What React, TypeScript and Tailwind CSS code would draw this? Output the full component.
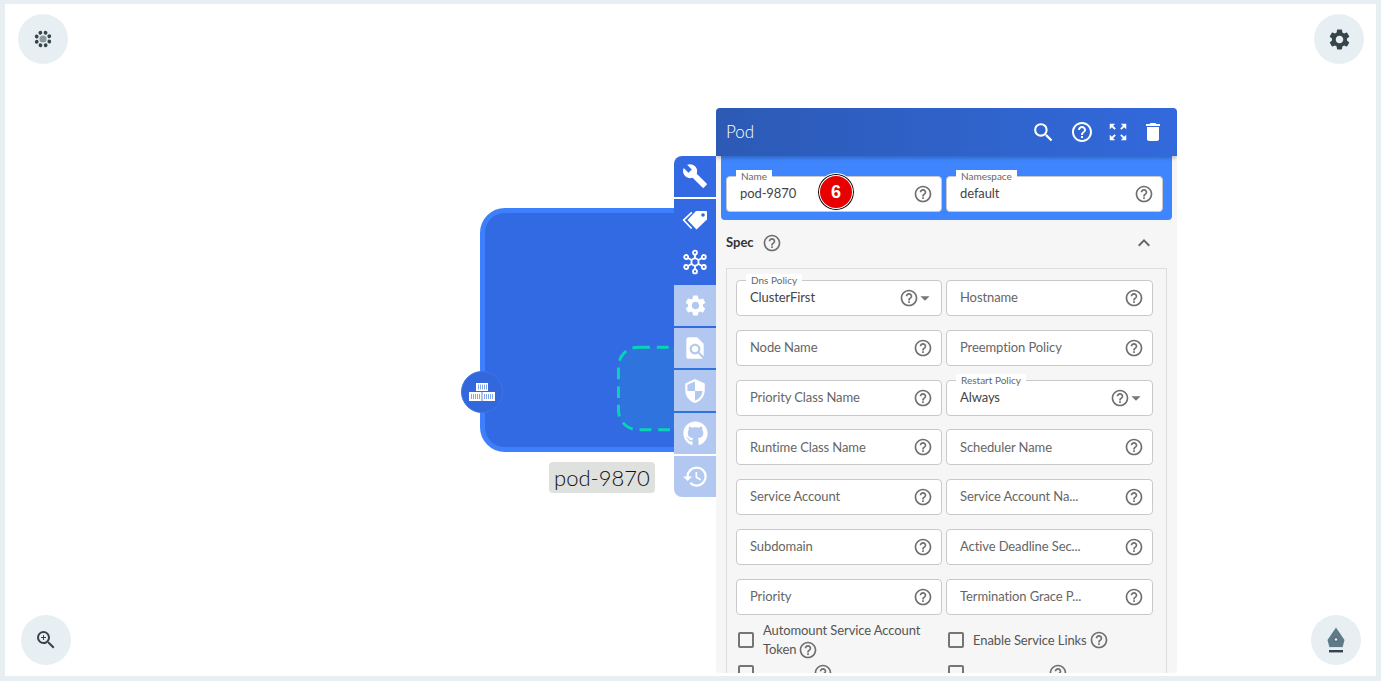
import { ReactNode } from "react";
import { FaGithub } from "react-icons/fa";
import {
  MdArrowDropDown,
  MdBuild,
  MdDelete,
  MdExpandLess,
  MdFindInPage,
  MdHelpOutline,
  MdHistory,
  MdSearch,
  MdSecurity,
  MdSettings,
  MdZoomIn,
  MdZoomOutMap,
} from "react-icons/md";

const TagsIcon = () => (
  <svg width="26" height="26" viewBox="0 0 26 26" fill="none">
    <path d="M9.8 6.3 1.6 14.1l8 8.4" stroke="white" strokeWidth="1.6" />
    <path d="M14 5h10a1 1 0 0 1 1 1v7.5L14.5 23.5 5.5 14z" fill="white" />
    <circle cx="21" cy="9" r="1.8" fill="#3369e3" />
  </svg>
);

const HubIcon = () => (
  <svg width="26" height="26" viewBox="0 0 26 26" fill="none" stroke="white" strokeWidth="1.8">
    <circle cx="13" cy="13" r="3.6" />
    <circle cx="13" cy="3.6" r="2" />
    <circle cx="13" cy="22.4" r="2" />
    <circle cx="4.2" cy="8" r="2" />
    <circle cx="21.8" cy="8" r="2" />
    <circle cx="4.2" cy="18" r="2" />
    <circle cx="21.8" cy="18" r="2" />
    <path d="M13 5.6v3.8M13 16.6v3.8M6 9l3.9 2.2M20 9l-3.9 2.2M6 17l3.9-2.2M20 17l-3.9-2.2" />
  </svg>
);

const ContainersIcon = () => (
  <svg width="26" height="18" viewBox="0 0 26 18" fill="white">
    <path d="M7 0h12v8H7zM0 9h12.6v9H0zM13.4 9H26v9H13.4z" />
    <path
      d="M9.5 1.5v5M11.5 1.5v5M13.5 1.5v5M15.5 1.5v5M17.5 1.5v5M2.5 11v5M4.5 11v5M6.5 11v5M8.5 11v5M10.5 11v5M15.5 11v5M17.5 11v5M19.5 11v5M21.5 11v5M23.5 11v5"
      stroke="#3268dc"
      strokeWidth="0.6"
    />
  </svg>
);

const FlowerIcon = () => (
  <svg width="18" height="18" viewBox="0 0 18 18">
    <circle cx="9" cy="9" r="3.6" fill="#8c989d" />
    {[0, 45, 90, 135, 180, 225, 270, 315].map((a) => (
      <circle key={a} cx="9" cy="2.2" r="1.9" fill="#36454c" transform={`rotate(${a + 22} 9 9)`} />
    ))}
  </svg>
);

const PenIcon = () => (
  <svg width="20" height="26" viewBox="0 0 20 26">
    <path d="M10 0.5 18.5 13 16.5 20.5H3.5L1.5 13z" fill="#5f7a89" />
    <path d="M3.5 20.5h13" stroke="#dfe6e9" strokeWidth="1" />
    <circle cx="10" cy="12.5" r="1.8" fill="#e8eff2" stroke="#36454c" strokeWidth="0.7" />
    <rect x="3" y="23" width="14" height="2.4" fill="#36454c" />
  </svg>
);

const Help = ({ size = 20 }: { size?: number }) => (
  <MdHelpOutline size={size} className="shrink-0 text-[#6f6f6f]" />
);

const CornerButton = ({ className, children }: { className: string; children: ReactNode }) => (
  <div className={`absolute flex h-[50px] w-[50px] items-center justify-center rounded-full bg-[#e8eff2] ${className}`}>
    {children}
  </div>
);

const Field = ({ label, value, legend, select }: { label?: string; value?: string; legend?: string; select?: boolean }) => (
  <div className="relative flex h-9 min-w-0 items-center rounded border border-[#c9c9c9] bg-white pl-[13px] pr-2 text-[13px] tracking-[-0.1px]">
    {legend && (
      <span className="absolute left-[9px] top-[-7px] bg-white px-[5px] text-[10px] leading-[12px] tracking-normal text-[#666]">
        {legend}
      </span>
    )}
    <span className={`flex-1 truncate ${value ? "text-[#444]" : "text-[#666]"}`}>{value ?? label}</span>
    <Help />
    {select && <MdArrowDropDown size={22} className="-ml-[5px] -mr-[3px] text-[#777]" />}
  </div>
);

const Check = ({ children }: { children?: ReactNode }) => (
  <div className="flex items-center gap-[9px] pl-[2px] text-[13px] leading-[19px] tracking-[-0.1px] text-[#555]">
    <span className="h-4 w-4 shrink-0 rounded-[2px] border-2 border-[#757575]" />
    <div>{children}</div>
  </div>
);

const tabs = [
  { icon: <MdBuild size={26} />, active: true, round: "rounded-tl-lg" },
  { icon: <TagsIcon />, active: true },
  { icon: <HubIcon />, active: true },
  { icon: <MdSettings size={25} />, active: false },
  { icon: <MdFindInPage size={26} />, active: false },
  { icon: <MdSecurity size={26} />, active: false },
  { icon: <FaGithub size={25} />, active: false },
  { icon: <MdHistory size={27} />, active: false, round: "rounded-bl-lg" },
];

const fields: { label?: string; value?: string; legend?: string; select?: boolean }[] = [
  { value: "ClusterFirst", legend: "Dns Policy", select: true },
  { label: "Hostname" },
  { label: "Node Name" },
  { label: "Preemption Policy" },
  { label: "Priority Class Name" },
  { value: "Always", legend: "Restart Policy", select: true },
  { label: "Runtime Class Name" },
  { label: "Scheduler Name" },
  { label: "Service Account" },
  { label: "Service Account Na..." },
  { label: "Subdomain" },
  { label: "Active Deadline Sec..." },
  { label: "Priority" },
  { label: "Termination Grace P..." },
];

export default function App() {
  return (
    <div className="h-[681px] w-[1381px] overflow-hidden bg-[#e8eff2] pb-[5px] pl-[5px] pr-[5px] pt-1 font-['Lato',sans-serif]">
      <div className="relative h-full w-full overflow-hidden bg-white">
        <CornerButton className="left-[13px] top-[10px]">
          <FlowerIcon />
        </CornerButton>
        <CornerButton className="left-[1309px] top-[10px]">
          <MdSettings size={25} className="text-[#36454c]" />
        </CornerButton>
        <CornerButton className="left-4 top-[611px]">
          <MdZoomIn size={24} className="text-[#36454c]" />
        </CornerButton>
        <CornerButton className="left-[1306px] top-[611px]">
          <PenIcon />
        </CornerButton>

        {/* Pod node on the canvas */}
        <div className="absolute left-[475px] top-[204px] flex h-[244px] w-[260px] items-end rounded-[25px] border-[5px] border-[#3d7ffc] bg-[#326ae3] pb-[15px] pl-[132px]">
          <svg width="120" height="87" viewBox="0 0 120 87" fill="#2f74de">
            <rect x="1.5" y="1.5" width="117" height="84" rx="20" stroke="#06d4b4" strokeWidth="3" strokeDasharray="12 7" />
          </svg>
        </div>
        <div className="absolute left-[456px] top-[367px] flex h-[42px] w-[42px] items-center justify-center rounded-full border border-[#3d74e6] bg-[#3268dc]">
          <ContainersIcon />
        </div>
        <div className="absolute left-[544px] top-[458px] rounded bg-[#dfe1df] px-[5px] text-[22px] font-light leading-[31px] text-[#111]">
          pod-9870
        </div>

        {/* Floating panel with its side tabs */}
        <div className="absolute left-[669px] top-[104px] flex h-[565px] items-start">
          <div className="mt-12 flex h-[341px] w-[42px] flex-col gap-[2px]">
            {tabs.map((t, i) => (
              <div
                key={i}
                className={`flex flex-1 items-center justify-center text-white ${t.active ? "bg-[#3369e3]" : "bg-[#b3c8f1]"} ${t.round ?? ""}`}
              >
                {t.icon}
              </div>
            ))}
          </div>
          <div className="relative flex h-full w-[461px] flex-col overflow-hidden rounded bg-[#f6f6f6]">
            <div className="z-10 flex h-12 shrink-0 items-center bg-gradient-to-r from-[#2c5ab5] to-[#3269dc] pl-[10px] pr-[12px] text-white shadow-[0_2px_4px_rgba(0,0,0,0.25)]">
              <span className="flex-1 text-[17px] font-light">Pod</span>
              <div className="flex items-center">
                <MdSearch size={25} />
                <MdHelpOutline size={24} className="ml-[14px]" />
                <MdZoomOutMap size={22} className="ml-[13px]" />
                <MdDelete size={24} className="ml-3" />
              </div>
            </div>
            <div className="mx-[5px] grid shrink-0 grid-cols-[216px_217px] gap-1 rounded-b bg-[#3f86fe] pb-2 pl-[5px] pt-5">
              <div className="relative">
                <Field value="pod-9870" legend="Name" />
                <div className="absolute left-[91px] top-[-3px] flex h-[38px] w-[38px] items-center justify-center rounded-full border border-white bg-[#e80000] font-['Liberation_Sans',sans-serif] text-lg font-bold text-white shadow-[inset_0_0_0_1px_black,inset_0_0_0_2px_white]">
                  6
                </div>
              </div>
              <Field value="default" legend="Namespace" />
            </div>
            <div className="flex h-[48px] shrink-0 items-center pb-[2px] pl-[10px] pr-[21px]">
              <span className="text-[13px] font-bold text-[#333]">Spec</span>
              <span className="ml-[8px] flex-1">
                <Help />
              </span>
              <MdExpandLess size={24} className="text-[#666]" />
            </div>
            <div className="mx-[10px] shrink-0 border border-[#ddd] pl-[9px] pt-[11px]">
              <div className="grid grid-cols-[206px_207px] gap-x-1 gap-y-[13.75px]">
                {fields.map((f) => (
                  <Field key={f.label ?? f.value} {...f} />
                ))}
              </div>
              <div className="mt-[6px] grid grid-cols-[206px_207px] gap-x-1 gap-y-[3px]">
                <Check>
                  Automount Service Account
                  <br />
                  <span className="inline-flex items-center gap-[2px]">
                    Token <Help />
                  </span>
                </Check>
                <Check>
                  <span className="inline-flex items-center gap-[2px]">
                    Enable Service Links <Help />
                  </span>
                </Check>
                <Check>
                  <span className="ml-[50px] block">
                    <Help />
                  </span>
                </Check>
                <Check>
                  <span className="ml-[75px] block">
                    <Help />
                  </span>
                </Check>
              </div>
            </div>
          </div>
        </div>
      </div>
    </div>
  );
}
